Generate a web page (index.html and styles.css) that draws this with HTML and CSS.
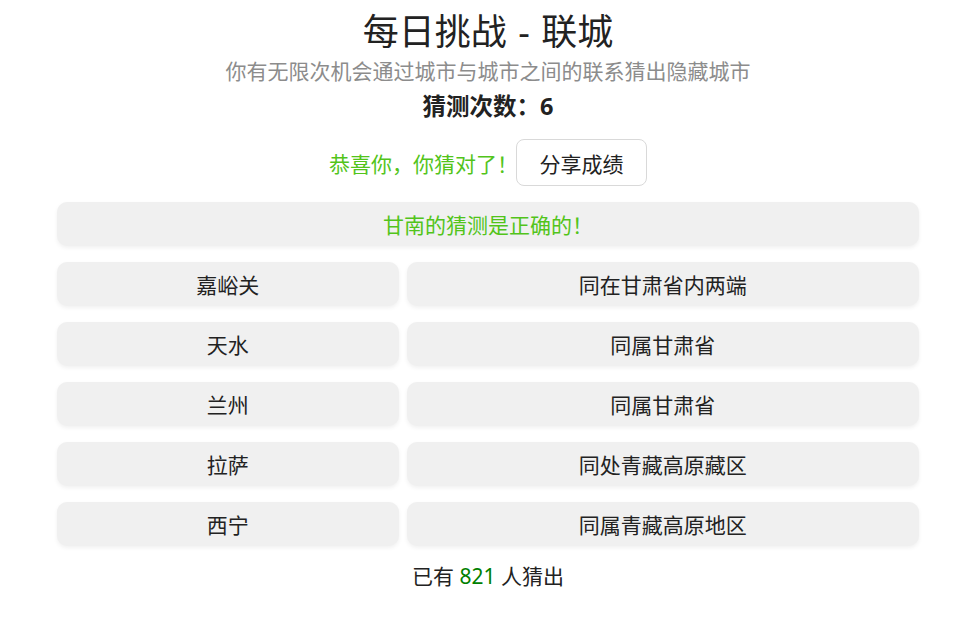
FILE: index.html
```html
<!DOCTYPE html>
<html lang="zh">
<head>
<meta charset="utf-8">
<title>每日挑战 - 联城</title>
<link rel="stylesheet" href="styles.css">
</head>
<body>
<main class="page">
  <h1 class="title">每日挑战 - 联城</h1>
  <p class="subtitle">你有无限次机会通过城市与城市之间的联系猜出隐藏城市</p>
  <p class="count">猜测次数：6</p>
  <div class="result">
    <span class="congrats">恭喜你，你猜对了！</span>
    <button class="share">分享成绩</button>
  </div>
  <div class="answer">甘南的猜测是正确的！</div>
  <div class="grid">
    <div class="cell">嘉峪关</div><div class="cell">同在甘肃省内两端</div>
    <div class="cell">天水</div><div class="cell">同属甘肃省</div>
    <div class="cell">兰州</div><div class="cell">同属甘肃省</div>
    <div class="cell">拉萨</div><div class="cell">同处青藏高原藏区</div>
    <div class="cell">西宁</div><div class="cell">同属青藏高原地区</div>
  </div>
  <p class="footer">已有 <span class="num">821</span> 人猜出</p>
</main>
</body>
</html>
```
FILE: styles.css
```css
* { box-sizing: border-box; }
html, body { margin: 0; padding: 0; background: #fff; }
body {
  font-family: "Noto Sans", "Noto Sans CJK SC", sans-serif;
  color: #222;
}
.page {
  width: 862px;
  margin-left: 57px;
  display: flex;
  flex-direction: column;
  align-items: stretch;
}
.title {
  margin: 8px 0 0;
  font-size: 36px;
  font-weight: 400;
  line-height: 48px;
  word-spacing: 2px;
  text-align: center;
}
.subtitle {
  margin: 0;
  font-size: 21px;
  line-height: 30px;
  color: #8c8c8c;
  text-align: center;
}
.count {
  margin: 3px 0 0;
  font-size: 23.5px;
  font-weight: 700;
  line-height: 34px;
  text-align: center;
}
.result {
  margin-top: 16px;
  display: flex;
  justify-content: center;
  align-items: center;
}
.congrats {
  font-size: 21px;
  color: #52c41a;
}
.share {
  width: 131px;
  height: 47px;
  margin-left: -2px;
  font-family: inherit;
  font-size: 21px;
  color: #222;
  background: #fff;
  border: 1px solid #d9d9d9;
  border-radius: 8px;
}
.answer, .cell {
  height: 44px;
  display: flex;
  align-items: center;
  justify-content: center;
  background: #f0f0f0;
  border-radius: 10px;
  box-shadow: 0 2px 4px rgba(0, 0, 0, 0.06);
  font-size: 21px;
}
.answer {
  margin-top: 16px;
  color: #52c41a;
}
.grid {
  margin-top: 16px;
  display: grid;
  grid-template-columns: 2fr 3fr;
  column-gap: 8px;
  row-gap: 16px;
}
.footer {
  margin: 15px 0 0;
  font-size: 21px;
  line-height: 30px;
  text-align: center;
}
.num { color: #008000; }
```
